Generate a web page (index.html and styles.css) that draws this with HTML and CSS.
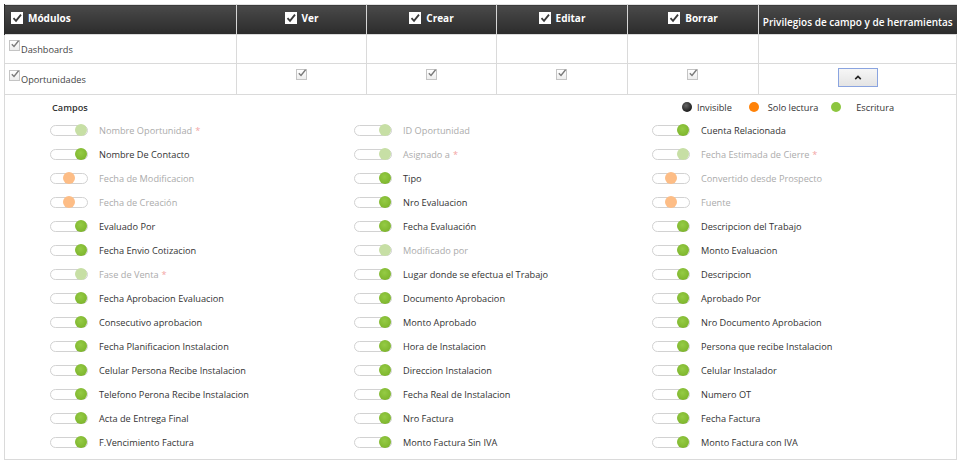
FILE: index.html
```html
<!DOCTYPE html>
<html>
<head>
  <title>Permisos de perfil</title>
  <link rel="stylesheet" href="styles.css">
</head>
<body>
  <div class="perm">
    <table class="perm-table">
      <colgroup>
        <col class="w-mod">
        <col class="w-act">
        <col class="w-act">
        <col class="w-act2">
        <col class="w-act2">
        <col>
      </colgroup>
      <thead>
        <tr>
          <th class="th-mod"><span class="hchk"><svg viewBox="0 0 12 12"><path d="M2.5 6.2 L5 8.8 L10 2.6" /></svg></span>Módulos</th>
          <th><span class="hchk"><svg viewBox="0 0 12 12"><path d="M2.5 6.2 L5 8.8 L10 2.6" /></svg></span>Ver</th>
          <th><span class="hchk"><svg viewBox="0 0 12 12"><path d="M2.5 6.2 L5 8.8 L10 2.6" /></svg></span>Crear</th>
          <th><span class="hchk"><svg viewBox="0 0 12 12"><path d="M2.5 6.2 L5 8.8 L10 2.6" /></svg></span>Editar</th>
          <th><span class="hchk"><svg viewBox="0 0 12 12"><path d="M2.5 6.2 L5 8.8 L10 2.6" /></svg></span>Borrar</th>
          <th class="th-priv">Privilegios de campo y de herramientas</th>
        </tr>
      </thead>
      <tbody>
        <tr>
          <td class="mod"><span class="chk"><svg viewBox="0 0 10 10"><path d="M1.8 5.2 L4 7.4 L8.6 1.8" /></svg></span>Dashboards</td>
          <td></td><td></td><td></td><td></td><td></td>
        </tr>
        <tr>
          <td class="mod"><span class="chk"><svg viewBox="0 0 10 10"><path d="M1.8 5.2 L4 7.4 L8.6 1.8" /></svg></span>Oportunidades</td>
          <td class="c"><span class="chk"><svg viewBox="0 0 10 10"><path d="M1.8 5.2 L4 7.4 L8.6 1.8" /></svg></span></td>
          <td class="c"><span class="chk"><svg viewBox="0 0 10 10"><path d="M1.8 5.2 L4 7.4 L8.6 1.8" /></svg></span></td>
          <td class="c"><span class="chk"><svg viewBox="0 0 10 10"><path d="M1.8 5.2 L4 7.4 L8.6 1.8" /></svg></span></td>
          <td class="c"><span class="chk"><svg viewBox="0 0 10 10"><path d="M1.8 5.2 L4 7.4 L8.6 1.8" /></svg></span></td>
          <td class="c"><button class="collapse-btn"><svg viewBox="0 0 10 6"><path d="M1.5 5 L5 1.6 L8.5 5" /></svg></button></td>
        </tr>
        <tr class="fields-row">
          <td colspan="6">
            <div class="fields">
              <div class="fields-head">
                <span class="campos">Campos</span>
                <div class="legend">
                  <span class="dot dot-black"></span><span class="legend-label">Invisible</span>
                  <span class="dot dot-orange"></span><span class="legend-label">Solo lectura</span>
                  <span class="dot dot-green"></span><span class="legend-label legend-last">Escritura</span>
                </div>
              </div>
              <div class="field-grid">
                <div class="field-col">
                  <div class="field off"><span class="sw sw-w"><i></i></span>Nombre Oportunidad <em>*</em></div>
                  <div class="field"><span class="sw sw-w"><i></i></span>Nombre De Contacto</div>
                  <div class="field off"><span class="sw sw-r"><i></i></span>Fecha de Modificacion</div>
                  <div class="field off"><span class="sw sw-r"><i></i></span>Fecha de Creación</div>
                  <div class="field"><span class="sw sw-w"><i></i></span>Evaluado Por</div>
                  <div class="field"><span class="sw sw-w"><i></i></span>Fecha Envio Cotizacion</div>
                  <div class="field off"><span class="sw sw-w"><i></i></span>Fase de Venta <em>*</em></div>
                  <div class="field"><span class="sw sw-w"><i></i></span>Fecha Aprobacion Evaluacion</div>
                  <div class="field"><span class="sw sw-w"><i></i></span>Consecutivo aprobacion</div>
                  <div class="field"><span class="sw sw-w"><i></i></span>Fecha Planificacion Instalacion</div>
                  <div class="field"><span class="sw sw-w"><i></i></span>Celular Persona Recibe Instalacion</div>
                  <div class="field"><span class="sw sw-w"><i></i></span>Telefono Perona Recibe Instalacion</div>
                  <div class="field"><span class="sw sw-w"><i></i></span>Acta de Entrega Final</div>
                  <div class="field"><span class="sw sw-w"><i></i></span>F.Vencimiento Factura</div>
                </div>
                <div class="field-col">
                  <div class="field off"><span class="sw sw-w"><i></i></span>ID Oportunidad</div>
                  <div class="field off"><span class="sw sw-w"><i></i></span>Asignado a <em>*</em></div>
                  <div class="field"><span class="sw sw-w"><i></i></span>Tipo</div>
                  <div class="field"><span class="sw sw-w"><i></i></span>Nro Evaluacion</div>
                  <div class="field"><span class="sw sw-w"><i></i></span>Fecha Evaluación</div>
                  <div class="field off"><span class="sw sw-w"><i></i></span>Modificado por</div>
                  <div class="field"><span class="sw sw-w"><i></i></span>Lugar donde se efectua el Trabajo</div>
                  <div class="field"><span class="sw sw-w"><i></i></span>Documento Aprobacion</div>
                  <div class="field"><span class="sw sw-w"><i></i></span>Monto Aprobado</div>
                  <div class="field"><span class="sw sw-w"><i></i></span>Hora de Instalacion</div>
                  <div class="field"><span class="sw sw-w"><i></i></span>Direccion Instalacion</div>
                  <div class="field"><span class="sw sw-w"><i></i></span>Fecha Real de Instalacion</div>
                  <div class="field"><span class="sw sw-w"><i></i></span>Nro Factura</div>
                  <div class="field"><span class="sw sw-w"><i></i></span>Monto Factura Sin IVA</div>
                </div>
                <div class="field-col">
                  <div class="field"><span class="sw sw-w"><i></i></span>Cuenta Relacionada</div>
                  <div class="field off"><span class="sw sw-w"><i></i></span>Fecha Estimada de Cierre <em>*</em></div>
                  <div class="field off"><span class="sw sw-r"><i></i></span>Convertido desde Prospecto</div>
                  <div class="field off"><span class="sw sw-r"><i></i></span>Fuente</div>
                  <div class="field"><span class="sw sw-w"><i></i></span>Descripcion del Trabajo</div>
                  <div class="field"><span class="sw sw-w"><i></i></span>Monto Evaluacion</div>
                  <div class="field"><span class="sw sw-w"><i></i></span>Descripcion</div>
                  <div class="field"><span class="sw sw-w"><i></i></span>Aprobado Por</div>
                  <div class="field"><span class="sw sw-w"><i></i></span>Nro Documento Aprobacion</div>
                  <div class="field"><span class="sw sw-w"><i></i></span>Persona que recibe Instalacion</div>
                  <div class="field"><span class="sw sw-w"><i></i></span>Celular Instalador</div>
                  <div class="field"><span class="sw sw-w"><i></i></span>Numero OT</div>
                  <div class="field"><span class="sw sw-w"><i></i></span>Fecha Factura</div>
                  <div class="field"><span class="sw sw-w"><i></i></span>Monto Factura con IVA</div>
                </div>
              </div>
            </div>
          </td>
        </tr>
      </tbody>
    </table>
  </div>
</body>
</html>
```

FILE: styles.css
```css
body {
  margin: 0;
  background: #FFFFFF;
  font-family: 'Open Sans', 'Noto Sans', sans-serif;
  font-size: 9.2px;
  color: #333333;
}

.perm {
  padding: 4px 0 0 4px;
  width: 953px;
}

.perm-table {
  width: 953px;
  border-collapse: collapse;
  table-layout: fixed;
  border-top: 1px solid #E2E2E2;
}

.w-mod { width: 232px; }
.w-act { width: 130px; }
.w-act2 { width: 131px; }

/* Header */
.perm-table thead th {
  height: 26px;
  padding: 0 0 3px 0;
  background: linear-gradient(to bottom, #4A4A4A, #2B2B2B);
  color: #FFFFFF;
  font-size: 10px;
  font-weight: 700;
  text-align: center;
  vertical-align: middle;
  border-left: 1px solid #D6D6D6;
}

.perm-table thead th:first-child {
  border-left: 1px solid #2B2B2B;
}

.perm-table thead .th-mod {
  text-align: left;
  padding-left: 6px;
}

.perm-table thead .th-priv {
  font-weight: 600;
  font-size: 10px;
  padding: 4px 0 0 0;
  height: 25px;
}

.hchk {
  display: inline-block;
  width: 12px;
  height: 12px;
  background: #FFFFFF;
  vertical-align: -2px;
  margin-right: 5px;
}

.hchk svg {
  display: block;
  width: 12px;
  height: 12px;
}

.hchk path {
  fill: none;
  stroke: #3A3A3A;
  stroke-width: 1.8;
}

/* Body rows */
.perm-table tbody td {
  height: 28px;
  padding: 0;
  border: 1px solid #DADADA;
  vertical-align: middle;
}

.perm-table tbody td.mod {
  height: 25px;
  padding: 0 0 3px 4px;
  color: #444444;
}

.perm-table tbody td.c {
  text-align: center;
  height: 23px;
  padding-bottom: 5px;
}

.chk {
  display: inline-block;
  width: 9px;
  height: 9px;
  border: 1px solid #C4C4C4;
  background: linear-gradient(to bottom, #FFFFFF, #EDEDED);
  vertical-align: 2px;
  margin-right: 1px;
  position: relative;
}

.chk svg {
  position: absolute;
  left: 0;
  top: -2px;
  width: 10px;
  height: 10px;
}

.chk path {
  fill: none;
  stroke: #7A7A7A;
  stroke-width: 1.4;
}

.collapse-btn {
  width: 40px;
  height: 19px;
  padding: 0;
  border: 1px solid #8AA4E0;
  background: linear-gradient(to bottom, #F6F6F6, #E4E4E4);
  cursor: pointer;
  margin-top: 4px;
}

.collapse-btn svg {
  display: block;
  width: 8px;
  height: 5px;
  margin: 0 auto;
}

.collapse-btn path {
  fill: none;
  stroke: #222222;
  stroke-width: 2;
}

/* Field privileges */
.perm-table tbody .fields-row td {
  height: auto;
  border-top: none;
  vertical-align: top;
}

.fields {
  padding: 4px 0 5px 45px;
}

.fields-head {
  display: flex;
  justify-content: space-between;
  align-items: center;
  height: 16px;
  margin-bottom: 3px;
}

.campos {
  font-weight: 600;
  color: #333333;
  padding-left: 2px;
}

.legend {
  display: flex;
  align-items: center;
  padding-right: 62px;
  color: #333333;
}

.dot {
  width: 10px;
  height: 10px;
  border-radius: 50%;
  margin-right: 5px;
}

.dot-black { background: radial-gradient(circle at 40% 35%, #666666, #1E1E1E 70%); }
.dot-orange { background: #FF8208; margin-right: 9px; }
.dot-green { background: #8DC63F; margin-right: 15px; }

.legend-label {
  margin-right: 17px;
}

.dot-orange + .legend-label {
  margin-right: 13px;
}

.legend .legend-last {
  margin-right: 0;
}

.field-grid {
  display: grid;
  grid-template-columns: 304px 298px 1fr;
}

.field {
  height: 24px;
  display: flex;
  align-items: center;
  color: #333333;
}

.field.off {
  color: #ABABAB;
}

.field em {
  font-style: normal;
  color: #F3A4A4;
  margin-left: 3px;
}

/* 3-position switch: left invisible, middle read only, right write */
.sw {
  position: relative;
  width: 36px;
  height: 9px;
  border: 1px solid #D2D2D2;
  border-radius: 6px;
  background: #FFFFFF;
  margin-right: 11px;
  flex-shrink: 0;
}

.sw i {
  position: absolute;
  top: -2px;
  width: 12px;
  height: 12px;
  border-radius: 50%;
}

.sw-w i {
  right: 0;
  background: radial-gradient(circle at 45% 40%, #95CB45, #76AE25);
}

.sw-r i {
  left: 12px;
  background: #FFA65E;
}

.field.off .sw-w i {
  background: #C7DFA5;
}

.field.off .sw-r i {
  background: #FDBD86;
}
```
